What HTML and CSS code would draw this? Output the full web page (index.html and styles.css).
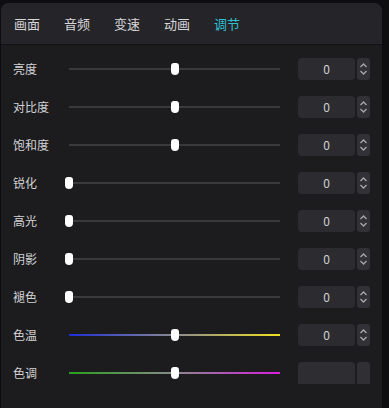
FILE: index.html
```html
<!DOCTYPE html>
<html lang="zh">
<head>
<meta charset="utf-8">
<link rel="stylesheet" href="styles.css">
</head>
<body>
<div class="panel">
  <div class="tabs">
    <span class="tab">画面</span>
    <span class="tab">音频</span>
    <span class="tab">变速</span>
    <span class="tab">动画</span>
    <span class="tab active">调节</span>
  </div>
  <div class="rows">
    <div class="row">
      <span class="label">亮度</span>
      <div class="slider"><div class="track"></div><div class="thumb" style="left:50%"></div></div>
      <div class="num">0</div>
      <div class="spin"><svg viewBox="0 0 13 22" width="13" height="22"><path d="M3.5 9 L6.5 6 L9.5 9 M3.5 13 L6.5 16 L9.5 13"/></svg></div>
    </div>
    <div class="row">
      <span class="label">对比度</span>
      <div class="slider"><div class="track"></div><div class="thumb" style="left:50%"></div></div>
      <div class="num">0</div>
      <div class="spin"><svg viewBox="0 0 13 22" width="13" height="22"><path d="M3.5 9 L6.5 6 L9.5 9 M3.5 13 L6.5 16 L9.5 13"/></svg></div>
    </div>
    <div class="row">
      <span class="label">饱和度</span>
      <div class="slider"><div class="track"></div><div class="thumb" style="left:50%"></div></div>
      <div class="num">0</div>
      <div class="spin"><svg viewBox="0 0 13 22" width="13" height="22"><path d="M3.5 9 L6.5 6 L9.5 9 M3.5 13 L6.5 16 L9.5 13"/></svg></div>
    </div>
    <div class="row">
      <span class="label">锐化</span>
      <div class="slider"><div class="track"></div><div class="thumb" style="left:0%"></div></div>
      <div class="num">0</div>
      <div class="spin"><svg viewBox="0 0 13 22" width="13" height="22"><path d="M3.5 9 L6.5 6 L9.5 9 M3.5 13 L6.5 16 L9.5 13"/></svg></div>
    </div>
    <div class="row">
      <span class="label">高光</span>
      <div class="slider"><div class="track"></div><div class="thumb" style="left:0%"></div></div>
      <div class="num">0</div>
      <div class="spin"><svg viewBox="0 0 13 22" width="13" height="22"><path d="M3.5 9 L6.5 6 L9.5 9 M3.5 13 L6.5 16 L9.5 13"/></svg></div>
    </div>
    <div class="row">
      <span class="label">阴影</span>
      <div class="slider"><div class="track"></div><div class="thumb" style="left:0%"></div></div>
      <div class="num">0</div>
      <div class="spin"><svg viewBox="0 0 13 22" width="13" height="22"><path d="M3.5 9 L6.5 6 L9.5 9 M3.5 13 L6.5 16 L9.5 13"/></svg></div>
    </div>
    <div class="row">
      <span class="label">褪色</span>
      <div class="slider"><div class="track"></div><div class="thumb" style="left:0%"></div></div>
      <div class="num">0</div>
      <div class="spin"><svg viewBox="0 0 13 22" width="13" height="22"><path d="M3.5 9 L6.5 6 L9.5 9 M3.5 13 L6.5 16 L9.5 13"/></svg></div>
    </div>
    <div class="row">
      <span class="label">色温</span>
      <div class="slider"><div class="track temp"></div><div class="thumb" style="left:50%"></div></div>
      <div class="num">0</div>
      <div class="spin"><svg viewBox="0 0 13 22" width="13" height="22"><path d="M3.5 9 L6.5 6 L9.5 9 M3.5 13 L6.5 16 L9.5 13"/></svg></div>
    </div>
    <div class="row">
      <span class="label">色调</span>
      <div class="slider"><div class="track tint"></div><div class="thumb" style="left:50%"></div></div>
      <div class="num blank"></div>
      <div class="spin blank"></div>
    </div>
  </div>
</div>
</body>
</html>
```
FILE: styles.css
```css
html, body {
  margin: 0;
  padding: 0;
  background: #0e0e10;
  width: 389px;
  height: 408px;
  overflow: hidden;
  font-family: "Noto Sans CJK SC", "Noto Sans", sans-serif;
}
.panel {
  margin: 3px 0 0 1px;
  width: 381px;
  height: 405px;
  background: #1c1c1f;
  border-radius: 8px 8px 0 0;
  overflow: hidden;
}
.tabs {
  height: 41px;
  background: #252529;
  border-bottom: 1px solid #131315;
  display: flex;
  align-items: center;
  gap: 24px;
  padding-left: 13px;
}
.tab {
  font-size: 13px;
  color: #d6d6d8;
  line-height: 18px;
}
.tab.active {
  color: #2fbfcf;
}
.rows {
  padding-top: 5px;
  display: flex;
  flex-direction: column;
}
.row {
  height: 38px;
  display: flex;
  align-items: center;
  padding-left: 12px;
}
.label {
  width: 56px;
  font-size: 12px;
  color: #d2d2d4;
  line-height: 16px;
}
.slider {
  position: relative;
  width: 211px;
  height: 12px;
  margin-right: 18px;
}
.track {
  position: absolute;
  left: 0;
  right: 0;
  top: 5px;
  height: 2px;
  background: #3a3a3d;
}
.track.temp {
  background: linear-gradient(to right, #1e2ed8, #8a8a92 50%, #f0e020);
}
.track.tint {
  background: linear-gradient(to right, #28a01e, #8a8a8a 50%, #d81ee0);
}
.thumb {
  position: absolute;
  top: 0;
  width: 8px;
  height: 12px;
  margin-left: -4px;
  background: #fff;
  border-radius: 3px 3px 4px 4px;
}
.num {
  width: 57px;
  height: 22px;
  background: #2c2c30;
  border-radius: 4px;
  color: #cfcfd2;
  font-size: 12px;
  line-height: 22px;
  text-align: center;
  margin-right: 2px;
}
.spin {
  width: 13px;
  height: 22px;
  background: #323236;
  border-radius: 3px;
}
.spin svg {
  display: block;
  fill: none;
  stroke: #a8a8ac;
  stroke-width: 1.3;
}
.num.blank {
  background: #2d2d32;
  border-radius: 4px 4px 0 0;
}
.spin.blank {
  background: #303034;
  border-radius: 3px 3px 0 0;
}
```
